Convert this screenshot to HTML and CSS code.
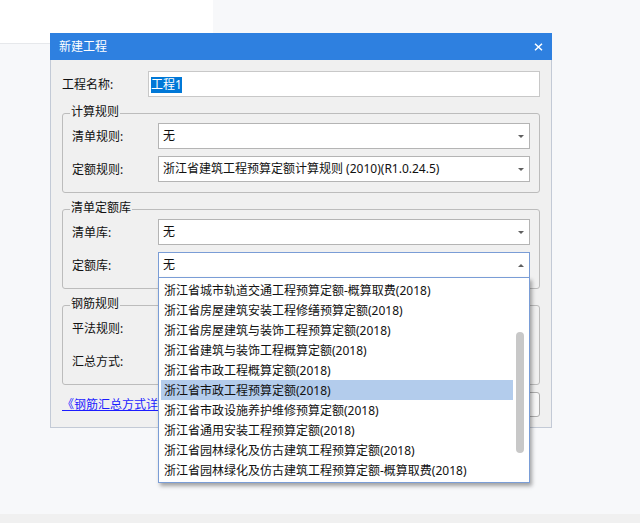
FILE: index.html
```html
<!DOCTYPE html>
<html lang="zh-CN">
<head>
<meta charset="utf-8">
<title>新建工程</title>
<link rel="stylesheet" href="styles.css">
</head>
<body>
<div class="page">
  <div class="top-panel"></div>
  <div class="spacer"></div>
  <div class="bottom-bar"></div>
</div>

<div class="dialog">
  <div class="titlebar">
    <span class="title">新建工程</span>
    <svg class="close" width="9" height="8" viewBox="0 0 9 8"><path d="M1 0.7 L8 7.3 M8 0.7 L1 7.3" stroke="#fff" stroke-width="1.5" fill="none"/></svg>
  </div>
  <div class="dlg-body">
    <div class="row">
      <span class="lbl">工程名称:</span>
      <div class="input"><span class="sel">工程1</span></div>
    </div>

    <div class="group">
      <span class="legend">计算规则</span>
      <div class="row">
        <span class="lbl">清单规则:</span>
        <div class="combo"><span class="val">无</span><span class="arrow"></span></div>
      </div>
      <div class="row">
        <span class="lbl">定额规则:</span>
        <div class="combo"><span class="val">浙江省建筑工程预算定额计算规则 (2010)(R1.0.24.5)</span><span class="arrow"></span></div>
      </div>
    </div>

    <div class="group">
      <span class="legend">清单定额库</span>
      <div class="row">
        <span class="lbl">清单库:</span>
        <div class="combo"><span class="val">无</span><span class="arrow"></span></div>
      </div>
      <div class="row">
        <span class="lbl">定额库:</span>
        <div class="combo open"><span class="val">无</span><span class="arrow up"></span>
          <div class="dropdown">
            <div class="items">
              <div class="item">浙江省城市轨道交通工程预算定额-概算取费(2018)</div>
              <div class="item">浙江省房屋建筑安装工程修缮预算定额(2018)</div>
              <div class="item">浙江省房屋建筑与装饰工程预算定额(2018)</div>
              <div class="item">浙江省建筑与装饰工程概算定额(2018)</div>
              <div class="item">浙江省市政工程概算定额(2018)</div>
              <div class="item hl">浙江省市政工程预算定额(2018)</div>
              <div class="item">浙江省市政设施养护维修预算定额(2018)</div>
              <div class="item">浙江省通用安装工程预算定额(2018)</div>
              <div class="item">浙江省园林绿化及仿古建筑工程预算定额(2018)</div>
              <div class="item">浙江省园林绿化及仿古建筑工程预算定额-概算取费(2018)</div>
            </div>
            <div class="scroll"><div class="thumb"></div></div>
          </div>
        </div>
      </div>
    </div>

    <div class="group">
      <span class="legend">钢筋规则</span>
      <div class="row">
        <span class="lbl">平法规则:</span>
        <div class="combo"><span class="arrow"></span></div>
      </div>
      <div class="row">
        <span class="lbl">汇总方式:</span>
        <div class="combo"><span class="arrow"></span></div>
      </div>
    </div>

    <div class="footer">
      <a class="link">《钢筋汇总方式详</a>
      <span class="btn"></span>
    </div>
  </div>
</div>
</body>
</html>
```

FILE: styles.css
```css
* { box-sizing: border-box; }
html, body { margin: 0; padding: 0; }
body {
  width: 640px;
  height: 523px;
  overflow: hidden;
  position: relative;
  background: #f7f8fa;
  font-family: "Noto Sans", "Noto Sans CJK SC", sans-serif;
  font-size: 12px;
  color: #111;
}
.page { display: flex; flex-direction: column; height: 523px; }
.top-panel { width: 213px; height: 44px; background: #fff; border-bottom: 1px solid #e6e8eb; }
.spacer { flex: 1; }
.bottom-bar { height: 9px; background: #f0f0f0; }

.dialog { position: absolute; left: 50px; top: 33px; width: 502px; }
.titlebar {
  height: 27px;
  background: #2e80e0;
  color: #fff;
  display: flex;
  align-items: center;
  padding: 0 9px 0 9px;
}
.title { line-height: 16px; }
.close { margin-left: auto; }

.dlg-body {
  background: #f0f0f0;
  border: 1px solid #c3cad6;
  border-top: none;
  padding: 11px 11px 10px 11px;
}
.row { display: flex; align-items: center; height: 26px; }
.lbl { width: 86px; flex: none; line-height: 16px; padding-top: 2px; white-space: nowrap; }
.input {
  flex: 1;
  height: 26px;
  background: #fff;
  border: 1px solid #c8c8c8;
  padding: 2px 0 0 2px;
  display: flex;
  align-items: center;
}
.sel { background: #0078d7; color: #fff; line-height: 16px; }

.group {
  position: relative;
  margin-top: 16px;
  border: 1px solid #bcbcbc;
  border-radius: 3px;
  padding: 9px 9px 10px 9px;
  display: flex;
  flex-direction: column;
  gap: 7px;
}
.legend {
  position: absolute;
  left: 7px;
  top: -10px;
  line-height: 16px;
  padding: 0 1px;
  background: #f0f0f0;
}
.combo {
  position: relative;
  flex: 1;
  height: 26px;
  background: #fff;
  border: 1px solid #b4b4b4;
  padding-left: 4px;
  display: flex;
  align-items: center;
}
.combo .val { line-height: 16px; white-space: nowrap; }
.arrow {
  margin-left: auto;
  margin-right: 5px;
  width: 0;
  height: 0;
  border-left: 3px solid transparent;
  border-right: 3px solid transparent;
  border-top: 3px solid #5f5f5f;
}
.arrow.up { border-top: none; border-bottom: 3px solid #5f5f5f; }
.combo.open { border-color: #7a9dd6; }

.dropdown {
  position: absolute;
  left: -1px;
  top: 24px;
  width: 372px;
  height: 206px;
  z-index: 10;
  background: #fff;
  border: 1px solid #7a9dd6;
  box-shadow: 2px 3px 4px rgba(0, 0, 0, 0.35);
  display: flex;
}
.items { flex: 1; padding: 2px 0 2px 2px; }
.item {
  height: 20px;
  line-height: 20px;
  padding: 1px 0 0 3px;
  white-space: nowrap;
  overflow: hidden;
  color: #111;
}
.item.hl { background: #b3ccec; }
.scroll { width: 16px; flex: none; }
.thumb {
  width: 8px;
  height: 121px;
  margin: 54px 0 0 3px;
  border-radius: 4px;
  background: #c8c8c8;
}

.footer {
  margin-top: 7px;
  height: 25px;
  display: flex;
  align-items: center;
}
.link {
  color: #1c1cff;
  text-decoration: underline;
  margin-right: auto;
  line-height: 16px;
  white-space: nowrap;
}
.btn {
  width: 72px;
  height: 25px;
  border: 1px solid #adadad;
  border-radius: 3px;
  background: #f7f7f7;
}
```
